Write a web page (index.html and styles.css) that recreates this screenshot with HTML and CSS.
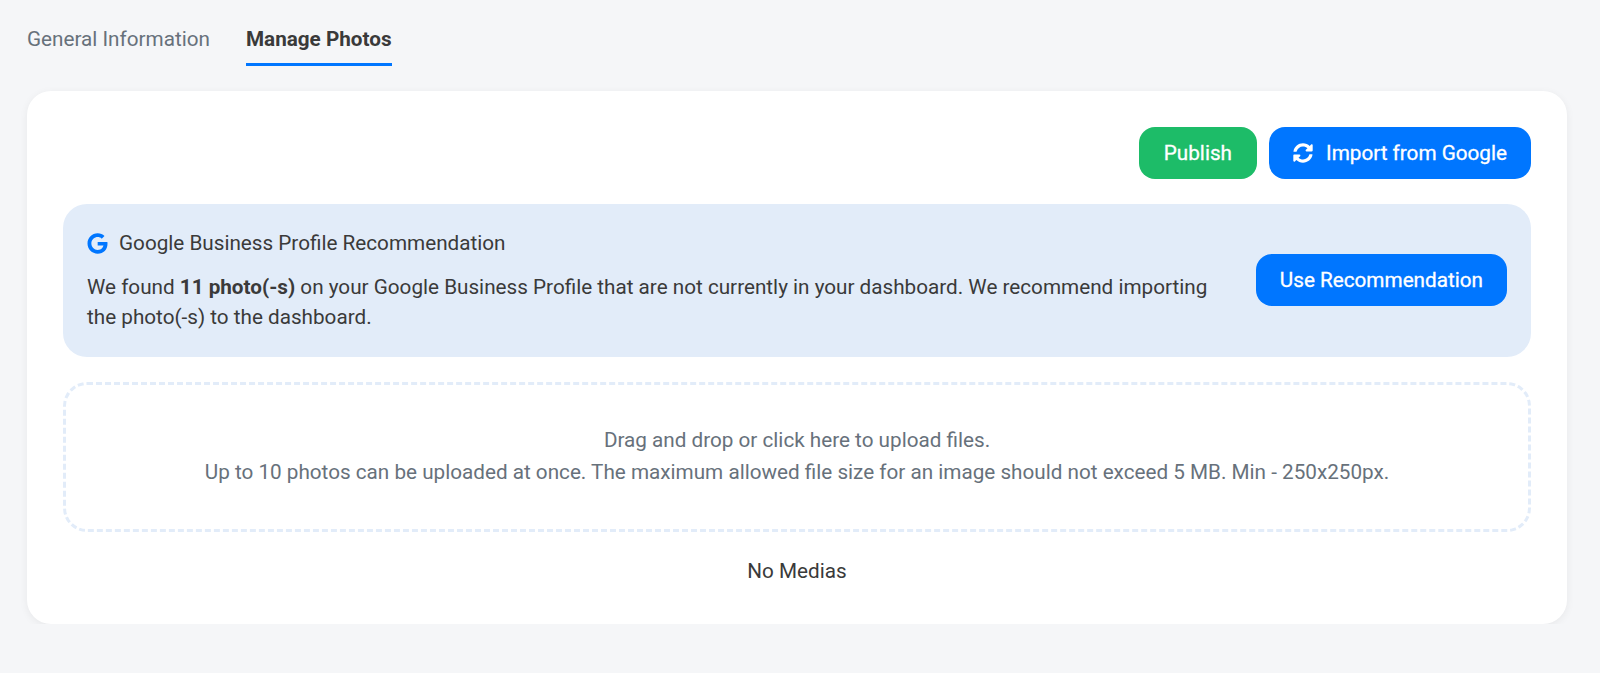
FILE: index.html
```html
<!DOCTYPE html>
<html lang="en">
<head>
    <meta charset="UTF-8">
    <meta name="viewport" content="width=device-width, initial-scale=1.0">
    <title>Manage Photos</title>
    <link rel="stylesheet" href="styles.css">
</head>
<body>
    <div class="tabs">
        <a class="tab">General Information</a>
        <a class="tab tab-active">Manage Photos</a>
    </div>

    <div class="card">
        <div class="actions">
            <button class="btn btn-green">Publish</button>
            <button class="btn btn-blue btn-import">
                <svg class="sync-icon" viewBox="0 0 512 512"><path fill="currentColor" d="M370.72 133.28C339.458 104.008 298.888 87.962 255.848 88c-77.458.068-144.328 53.178-162.791 126.85-1.344 5.363-6.122 9.15-11.651 9.15H24.103c-7.498 0-13.194-6.807-11.807-14.176C33.933 94.924 134.813 8 256 8c66.448 0 126.791 26.136 171.315 68.685L463.03 40.97C478.149 25.851 504 36.559 504 57.941V192c0 13.255-10.745 24-24 24H345.941c-21.382 0-32.09-25.851-16.971-40.971l41.75-41.749zM32 296h134.059c21.382 0 32.09 25.851 16.971 40.971l-41.75 41.75c31.262 29.273 71.835 45.319 114.876 45.28 77.418-.07 144.315-53.144 162.787-126.849 1.344-5.363 6.122-9.15 11.651-9.15h57.304c7.498 0 13.194 6.807 11.807 14.176C478.067 417.076 377.187 504 256 504c-66.448 0-126.791-26.136-171.315-68.685L48.97 471.03C33.851 486.149 8 475.441 8 454.059V320c0-13.255 10.745-24 24-24z"/></svg>
                Import from Google
            </button>
        </div>

        <!-- Recommendation -->
        <div class="recommend">
            <div class="recommend-text">
                <div class="recommend-title">
                    <svg class="google-icon" viewBox="0 0 488 512"><path fill="currentColor" d="M488 261.8C488 403.3 391.1 504 248 504 110.8 504 0 393.2 0 256S110.8 8 248 8c66.8 0 123 24.5 166.3 64.9l-67.5 64.9C258.5 52.6 94.3 116.6 94.3 256c0 86.5 69.1 156.6 153.7 156.6 98.2 0 135-70.4 140.8-106.9H248v-85.3h236.1c2.3 12.7 3.9 24.9 3.9 41.4z"/></svg>
                    Google Business Profile Recommendation
                </div>
                <p>We found <strong>11 photo(-s)</strong> on your Google Business Profile that are not currently in your dashboard. We recommend importing the photo(-s) to the dashboard.</p>
            </div>
            <button class="btn btn-blue">Use Recommendation</button>
        </div>

        <!-- Upload area -->
        <div class="dropzone">
            <div>Drag and drop or click here to upload files.</div>
            <div>Up to 10 photos can be uploaded at once. The maximum allowed file size for an image should not exceed 5 MB. Min - 250x250px.</div>
        </div>

        <div class="empty">No Medias</div>
    </div>
</body>
</html>
```

FILE: styles.css
```css
:root {
    --primary-color: #0076ff;
    --green-color: #1dbc68;
    --bg-color: #f5f6f8;
    --text-color: #3a3a3a;
    --muted-color: #67717b;
}

* {
    box-sizing: border-box;
    margin: 0;
    padding: 0;
}

body {
    background-color: var(--bg-color);
    color: var(--text-color);
    font-family: Roboto, "Liberation Sans", sans-serif;
    font-size: 20.7px;
    line-height: 32px;
    padding: 0 33px 0 27px;
}

.tabs {
    display: flex;
    gap: 36px;
    padding-top: 23px;
    height: 91px;
}

.tab {
    height: 43px;
    color: var(--muted-color);
}

.tab-active {
    color: var(--text-color);
    font-weight: 700;
    border-bottom: 3px solid var(--primary-color);
}

.card {
    background-color: #fff;
    border-radius: 24px;
    box-shadow: 0 2px 8px rgba(0, 0, 0, 0.06);
    padding: 36px;
    height: 533px;
}

.actions {
    display: flex;
    justify-content: flex-end;
    gap: 12px;
    margin-bottom: 25px;
}

.btn {
    border: none;
    border-radius: 16px;
    color: #fff;
    font-family: inherit;
    font-size: 20.7px;
    font-weight: 400;
    height: 52px;
    padding: 0 24px;
    flex-shrink: 0;
    -webkit-text-stroke: 0.3px #fff;
}

.btn-green {
    background-color: var(--green-color);
    padding: 0 25px;
}

.btn-blue {
    background-color: var(--primary-color);
}

.btn-import {
    display: flex;
    align-items: center;
    gap: 13px;
}

.sync-icon {
    width: 20px;
    height: 20px;
}

.recommend {
    display: flex;
    align-items: center;
    justify-content: space-between;
    gap: 48px;
    background-color: #e2ecf9;
    border-radius: 24px;
    padding: 22px 24px 24px;
    height: 153px;
    margin-bottom: 25px;
}

.recommend-title {
    display: flex;
    align-items: center;
    gap: 11px;
    margin-bottom: 13px;
}

.recommend p {
    line-height: 30px;
}

.google-icon {
    width: 21px;
    height: 21px;
    color: var(--primary-color);
}

.dropzone {
    border: 3px dashed #e2ecf9;
    border-radius: 24px;
    color: var(--muted-color);
    height: 150px;
    text-align: center;
    padding-top: 39px;
}

.empty {
    text-align: center;
    margin-top: 23px;
}
```
